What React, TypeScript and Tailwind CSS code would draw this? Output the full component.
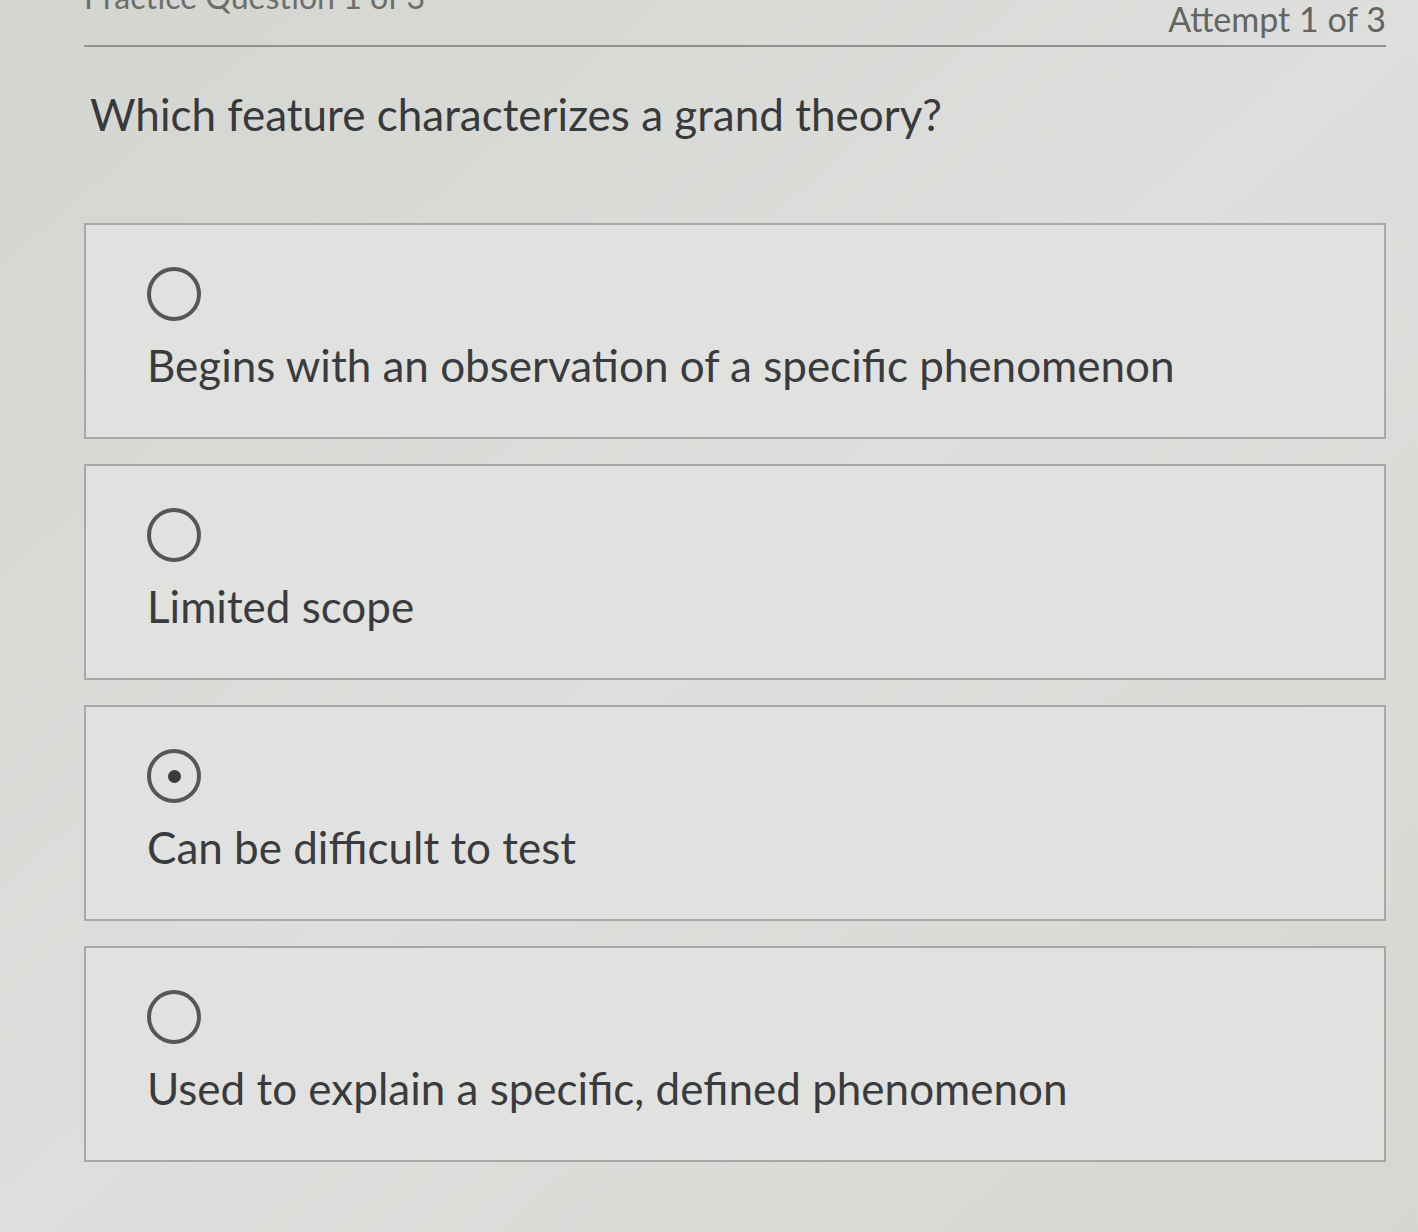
import { useState } from 'react';

const options = [
  'Begins with an observation of a specific phenomenon',
  'Limited scope',
  'Can be difficult to test',
  'Used to explain a specific, defined phenomenon',
];

export default function App() {
  const [selected, setSelected] = useState(2);

  return (
    <div
      className="min-h-[1232px] w-full overflow-hidden bg-gradient-to-br from-[#d3d5d1] via-[#dedfdc] to-[#d6d7d3] text-[#3b3b3d]"
      style={{ fontFamily: 'Lato, "Open Sans", sans-serif' }}
    >
      <div className="ml-[84px] mr-[32px]">
        {/* Header */}
        <div className="flex items-start justify-between border-b-2 border-[#8e918d] pb-[8px] pt-[1px]">
          <span className="-mt-[22px] text-[32px] leading-[36px] text-[#6c6e6b]">Practice Question 1 of 3</span>
          <span className="text-[34px] leading-[36px] text-[#626561]">Attempt 1 of 3</span>
        </div>

        <h1 className="mt-[40px] pl-[6px] text-[44px] leading-[54px] font-normal text-[#38393b]">
          Which feature characterizes a grand theory?
        </h1>

        {/* Options */}
        <div className="mt-[82px] flex flex-col gap-[25px]">
          {options.map((text, i) => (
            <button
              key={text}
              onClick={() => setSelected(i)}
              className="flex h-[216px] w-full flex-col items-start border-2 border-[#a7a9a6] bg-[#e1e2df] px-[61px] pt-[42px] text-left"
            >
              <span className="flex h-[54px] w-[54px] items-center justify-center rounded-full border-[4px] border-[#55565a]">
                {selected === i && <span className="h-[13px] w-[13px] rounded-full bg-[#3a3a40]" />}
              </span>
              <span className="mt-[16px] text-[44px] leading-[56px] text-[#3a3b3e]">{text}</span>
            </button>
          ))}
        </div>
      </div>
    </div>
  );
}
